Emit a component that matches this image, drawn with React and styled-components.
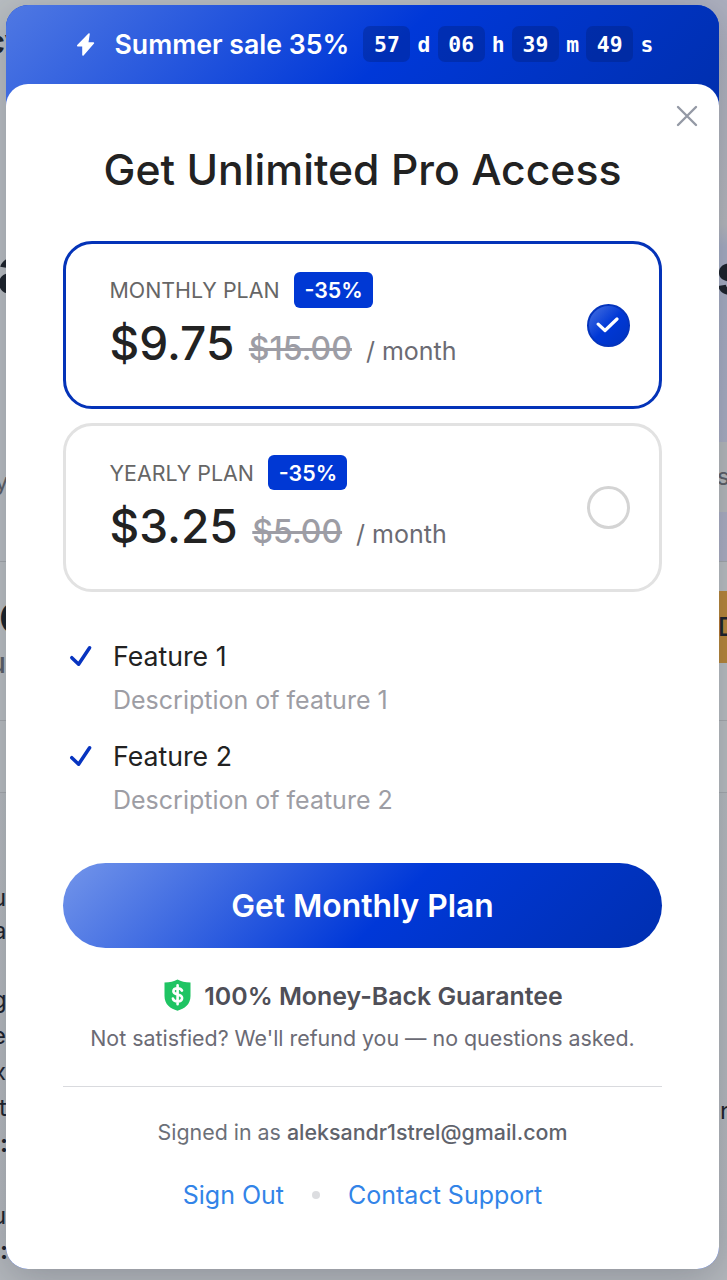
import React from "react";
import styled, { createGlobalStyle } from "styled-components";

const GlobalStyle = createGlobalStyle`
  * { box-sizing: border-box; }
  body { margin: 0; font-family: Inter, "Liberation Sans", sans-serif; background: #b8bdc1; }
  h1, p, ul { margin: 0; padding: 0; }
  button { font-family: inherit; border: 0; background: none; padding: 0; cursor: pointer; }
`;

const Screen = styled.div`
  position: relative;
  width: 727px;
  height: 1280px;
  overflow: hidden;
`;

/* Dimmed page behind the dialog */
const Page = styled.div`
  display: flex;
  flex-direction: column;
  height: 100%;
  background: linear-gradient(to bottom, #b9bec1, #b4b8bd);
`;

const Hero = styled.div`
  display: grid;
  grid-template-columns: 430px 1fr;
  height: 562px;
  border-bottom: 1px solid #a3a8ac;
`;

const HeroSide = styled.div`
  background: ${({ $tint }) => ($tint ? "linear-gradient(to bottom, #adb0bf 0 3%, #b6b8bd 40%, #a6adc3 44%, #acafc3)" : "#b9bec2")};
`;

const Section = styled.div`
  height: ${({ $h }) => $h}px;
  flex: none;
  background: ${({ $bg }) => $bg};
  border-bottom: 1px solid #a5a9ad;
`;

const EdgeColumn = styled.div`
  position: absolute;
  top: 0;
  ${({ $side }) => $side}: 0;
  width: 8px;
  height: 1280px;
  overflow: hidden;
  display: flex;
  flex-direction: column;
`;

const EdgeText = styled.div`
  flex: none;
  display: flex;
  align-items: center;
  height: ${({ $h }) => $h}px;
  line-height: 1;
  white-space: nowrap;
  font-size: ${({ $size }) => $size || 24}px;
  font-weight: ${({ $weight }) => $weight || 400};
  color: ${({ $color }) => $color || "#1c222b"};
  background: ${({ $bg }) => $bg || "transparent"};
  text-indent: ${({ $shift }) => $shift || 0}px;
`;

const BottomLine = styled.div`
  position: absolute;
  left: -4px;
  top: 1273px;
  font-size: 22px;
  line-height: 30px;
  font-weight: 500;
  color: #1c222b;
  white-space: pre;
`;

const Dialog = styled.section`
  position: absolute;
  top: 5px;
  left: 6px;
  width: 713px;
  height: 1264px;
  border-radius: 22px;
  display: flex;
  flex-direction: column;
  overflow: hidden;
  background: #0038d6;
  box-shadow: 0 8px 40px rgba(30, 35, 50, 0.25);
`;

const SaleBar = styled.header`
  flex: none;
  height: 100px;
  margin-bottom: -21.5px;
  padding: 0 66px 21.5px 68px;
  display: flex;
  align-items: center;
  color: #fff;
  background: linear-gradient(135deg, #4f78e3 0%, #0038d8 53%, #002fae 100%);
`;

const SaleIcon = styled.svg`
  width: 24px;
  height: 26px;
  flex: none;
`;

const SaleTitle = styled.span`
  margin-left: 16.5px;
  font-size: 26.7px;
  font-weight: 600;
  white-space: nowrap;
`;

const Timer = styled.div`
  display: flex;
  align-items: center;
  gap: 7.2px;
  margin-left: 14px;
  font-family: "DejaVu Sans Mono", monospace;
  font-weight: 700;
  font-size: 21.4px;
`;

const TimerCell = styled.span`
  width: 47px;
  height: 36px;
  border-radius: 7px;
  display: flex;
  align-items: center;
  justify-content: center;
  background: rgba(0, 30, 120, 0.36);
`;

const Panel = styled.main`
  position: relative;
  flex: 1;
  border-radius: 22px 22px 0 0;
  background: #fff;
  padding: 0 57px;
  display: flex;
  flex-direction: column;
`;

const CloseButton = styled.button`
  position: absolute;
  right: 20px;
  top: 20px;
  width: 24px;
  height: 24px;
  svg { display: block; }
`;

const Title = styled.h1`
  margin-top: 60px;
  text-align: center;
  font-size: 42.7px;
  line-height: 52px;
  font-weight: 500;
  color: #222;
  white-space: nowrap;
`;

const Plans = styled.div`
  margin-top: 45px;
  display: flex;
  flex-direction: column;
  gap: 14.5px;
`;

const PlanCard = styled.label`
  height: 168.3px;
  border: 3.5px solid ${({ $active }) => ($active ? "#0433b8" : "#e2e2e2")};
  border-radius: 29px;
  padding: 1px 29.5px 0 43.5px;
  display: flex;
  align-items: center;
  justify-content: space-between;
`;

const PlanInfo = styled.div`
  display: flex;
  flex-direction: column;
  margin-top: -7px;
`;

const PlanHead = styled.div`
  display: flex;
  align-items: center;
  gap: 14.5px;
  font-size: 21.4px;
  color: #666;
`;

const Badge = styled.span`
  height: 35.5px;
  width: 79px;
  display: flex;
  align-items: center;
  justify-content: center;
  border-radius: 6px;
  background: #0038d4;
  color: #fff;
  font-weight: 600;
`;

const PriceRow = styled.div`
  display: flex;
  align-items: baseline;
  margin-top: 7.5px;
  white-space: nowrap;
`;

const Price = styled.span`
  font-size: 46px;
  line-height: 56px;
  font-weight: 500;
  color: #222;
`;

const OldPrice = styled.s`
  margin-left: 14.5px;
  font-size: 32px;
  font-weight: 500;
  color: #9d9da5;
`;

const Period = styled.span`
  margin-left: 14px;
  font-size: 25px;
  color: #6b6b73;
`;

const Radio = styled.span`
  width: 43px;
  height: 43px;
  border-radius: 50%;
  display: flex;
  align-items: center;
  justify-content: center;
  border: ${({ $active }) => ($active ? "2.5px solid #0434bd" : "3.5px solid #d4d4d4")};
  background: ${({ $active }) => ($active ? "linear-gradient(135deg, #4a73e0, #0038d6 50%, #0033c0)" : "#fff")};
`;

const Features = styled.ul`
  list-style: none;
  margin-top: 42px;
  display: flex;
  flex-direction: column;
  gap: 12px;
`;

const Feature = styled.li`
  display: grid;
  grid-template-columns: 50px 1fr;
  line-height: 44px;
  font-size: 26.7px;
  color: #222;
  svg { margin: 11px 0 0 6px; }
`;

const FeatureNote = styled.p`
  grid-column: 2;
  font-size: 25px;
  color: #9d9da4;
`;

const BuyButton = styled.button`
  flex: none;
  margin-top: 41px;
  height: 85px;
  border-radius: 43px;
  color: #fff;
  font-size: 31.8px;
  font-weight: 600;
  background: linear-gradient(135deg, #7395ea 0%, #0038d8 54.5%, #002fb0 100%);
`;

const Guarantee = styled.div`
  margin-top: 30px;
  height: 36px;
  display: flex;
  align-items: center;
  justify-content: center;
  gap: 13px;
  font-size: 24.9px;
  font-weight: 600;
  color: #4f4f57;
  white-space: nowrap;
  svg { margin: -1px 0 0 2px; }
`;

const GuaranteeNote = styled.p`
  margin-top: 8px;
  text-align: center;
  font-size: 21.4px;
  line-height: 32px;
  color: #6b6b75;
  white-space: nowrap;
`;

const Divider = styled.div`
  margin-top: 32px;
  height: 1px;
  flex: none;
  background: #d9dade;
`;

const Account = styled.p`
  margin-top: 29px;
  text-align: center;
  font-size: 21.4px;
  line-height: 32px;
  color: #6c7078;
  b { font-weight: 500; color: #5f636c; }
`;

const Links = styled.nav`
  margin-top: 29px;
  display: flex;
  align-items: center;
  justify-content: center;
  gap: 28px;
  font-size: 25px;
  line-height: 36px;
`;

const Link = styled.a`
  color: #3284e8;
`;

const Dot = styled.span`
  width: 8px;
  height: 8px;
  border-radius: 50%;
  background: #dcdde0;
`;

const leftEdge = [
  { h: 84, text: "cv", size: 34, weight: 700, shift: -15, color: "#1c222b" },
  { h: 167 },
  { h: 35, text: "a", size: 66, weight: 700, shift: -3 },
  { h: 178 },
  { h: 36, text: "y", size: 24, shift: -5, color: "#5b6068" },
  { h: 98 },
  { h: 40, text: "O", size: 44, weight: 700, shift: -1, color: "#17222b" },
  { h: 14 },
  { h: 22, text: "u", size: 28, weight: 500, shift: -11, color: "#5b6068" },
  { h: 209 },
  { h: 30, text: "u", shift: -8 },
  { h: 36, text: "a", shift: -7 },
  { h: 33 },
  { h: 36, text: "g", shift: -8 },
  { h: 36, text: "e", shift: -8 },
  { h: 36, text: "x", shift: -7 },
  { h: 36, text: "t", shift: -1 },
  { h: 36, text: ":", weight: 700, shift: 0 },
  { h: 36 },
  { h: 36, text: "u", shift: -8 },
  { h: 34, text: ":", weight: 700, shift: 0 },
];

const rightEdge = [
  { h: 249 },
  { h: 50, text: "s", size: 56, weight: 700, shift: -3 },
  { h: 143 },
  { h: 70, text: "s", size: 24, shift: -2, color: "#5b6068", bg: "#b5b9bc" },
  { h: 79 },
  { h: 72, text: "D", size: 25, weight: 500, shift: -1, bg: "#b9873a" },
  { h: 430 },
  { h: 36, text: "n", shift: 1 },
];

const Edge = ({ side, rows }) => (
  <EdgeColumn $side={side} aria-hidden="true">
    {rows.map((r, i) => (
      <EdgeText key={i} $h={r.h} $size={r.size} $weight={r.weight} $shift={r.shift} $color={r.color} $bg={r.bg}>
        {r.text}
      </EdgeText>
    ))}
  </EdgeColumn>
);

const Plan = ({ name, price, old, active }) => (
  <PlanCard $active={active}>
    <PlanInfo>
      <PlanHead>
        <span>{name}</span>
        <Badge>-35%</Badge>
      </PlanHead>
      <PriceRow>
        <Price>{price}</Price>
        <OldPrice>{old}</OldPrice>
        <Period>/ month</Period>
      </PriceRow>
    </PlanInfo>
    <Radio $active={active}>
      {active && (
        <svg width="24" height="18" viewBox="0 0 24 18" fill="none">
          <path d="M2.2 8.2 L9 14.5 L21 3" stroke="#fff" strokeWidth="3.2" strokeLinecap="round" strokeLinejoin="round" />
        </svg>
      )}
    </Radio>
  </PlanCard>
);

const FeatureRow = ({ n }) => (
  <Feature>
    <svg width="24" height="24" viewBox="0 0 24 24" fill="none">
      <path d="M2.8 12.7 L9.6 19.2 L20.6 2.8" stroke="#0734c0" strokeWidth="3.5" strokeLinecap="round" strokeLinejoin="round" />
    </svg>
    <span>Feature {n}</span>
    <FeatureNote>Description of feature {n}</FeatureNote>
  </Feature>
);

const timer = [["57", "d"], ["06", "h"], ["39", "m"], ["49", "s"]];

export default function App() {
  return (
    <Screen>
      <GlobalStyle />
      <Page>
        <Hero>
          <HeroSide />
          <HeroSide $tint />
        </Hero>
        <Section $h={159} $bg="#babfc2" />
        <Section $h={72} $bg="#b9bec1" />
      </Page>
      <Edge side="left" rows={leftEdge} />
      <Edge side="right" rows={rightEdge} />
      <BottomLine>RUK: OTP 'UdU: 0Tb: VRUS do XI'</BottomLine>
      <Dialog>
        <SaleBar>
          <SaleIcon viewBox="0 0 24 26">
            <path d="M15 3 L3.8 14.6 H9 L9 24 L19.4 12 H13.6 Z" fill="#fff" stroke="#fff" strokeWidth="1.6" strokeLinejoin="round" />
          </SaleIcon>
          <SaleTitle>Summer sale 35%</SaleTitle>
          <Timer>
            {timer.map(([v, u]) => (
              <React.Fragment key={u}>
                <TimerCell>{v}</TimerCell>
                <span>{u}</span>
              </React.Fragment>
            ))}
          </Timer>
        </SaleBar>
        <Panel>
          <CloseButton aria-label="Close">
            <svg width="24" height="24" viewBox="0 0 24 24">
              <path d="M3 3 L21 21 M21 3 L3 21" stroke="#9499a5" strokeWidth="2.4" strokeLinecap="round" />
            </svg>
          </CloseButton>
          <Title>Get Unlimited Pro Access</Title>
          <Plans>
            <Plan name="MONTHLY PLAN" price="$9.75" old="$15.00" active />
            <Plan name="YEARLY PLAN" price="$3.25" old="$5.00" />
          </Plans>
          <Features>
            <FeatureRow n={1} />
            <FeatureRow n={2} />
          </Features>
          <BuyButton>Get Monthly Plan</BuyButton>
          <Guarantee>
            <svg width="27" height="32" viewBox="0 0 27 32">
              <path d="M13.5 0.5 C17 2.6 21 3.4 26.5 3.4 V17 C26.5 25.5 20.5 29.8 13.5 31.7 C6.5 29.8 0.5 25.5 0.5 17 V3.4 C6 3.4 10 2.6 13.5 0.5 Z" fill="#1fc463" />
              <path d="M18 11.6 C17.2 9.8 15.6 9.2 13.6 9.2 C11 9.2 9.4 10.4 9.4 12.3 C9.4 16.8 18.1 14.2 18.1 19 C18.1 21.2 16.2 22.4 13.6 22.4 C11.2 22.4 9.5 21.6 8.9 19.6 M13.6 6.2 V25.3" fill="none" stroke="#fff" strokeWidth="2.6" strokeLinecap="round" />
            </svg>
            100% Money-Back Guarantee
          </Guarantee>
          <GuaranteeNote>Not satisfied? We'll refund you — no questions asked.</GuaranteeNote>
          <Divider />
          <Account>Signed in as <b>aleksandr1strel@gmail.com</b></Account>
          <Links>
            <Link>Sign Out</Link>
            <Dot />
            <Link>Contact Support</Link>
          </Links>
        </Panel>
      </Dialog>
    </Screen>
  );
}
